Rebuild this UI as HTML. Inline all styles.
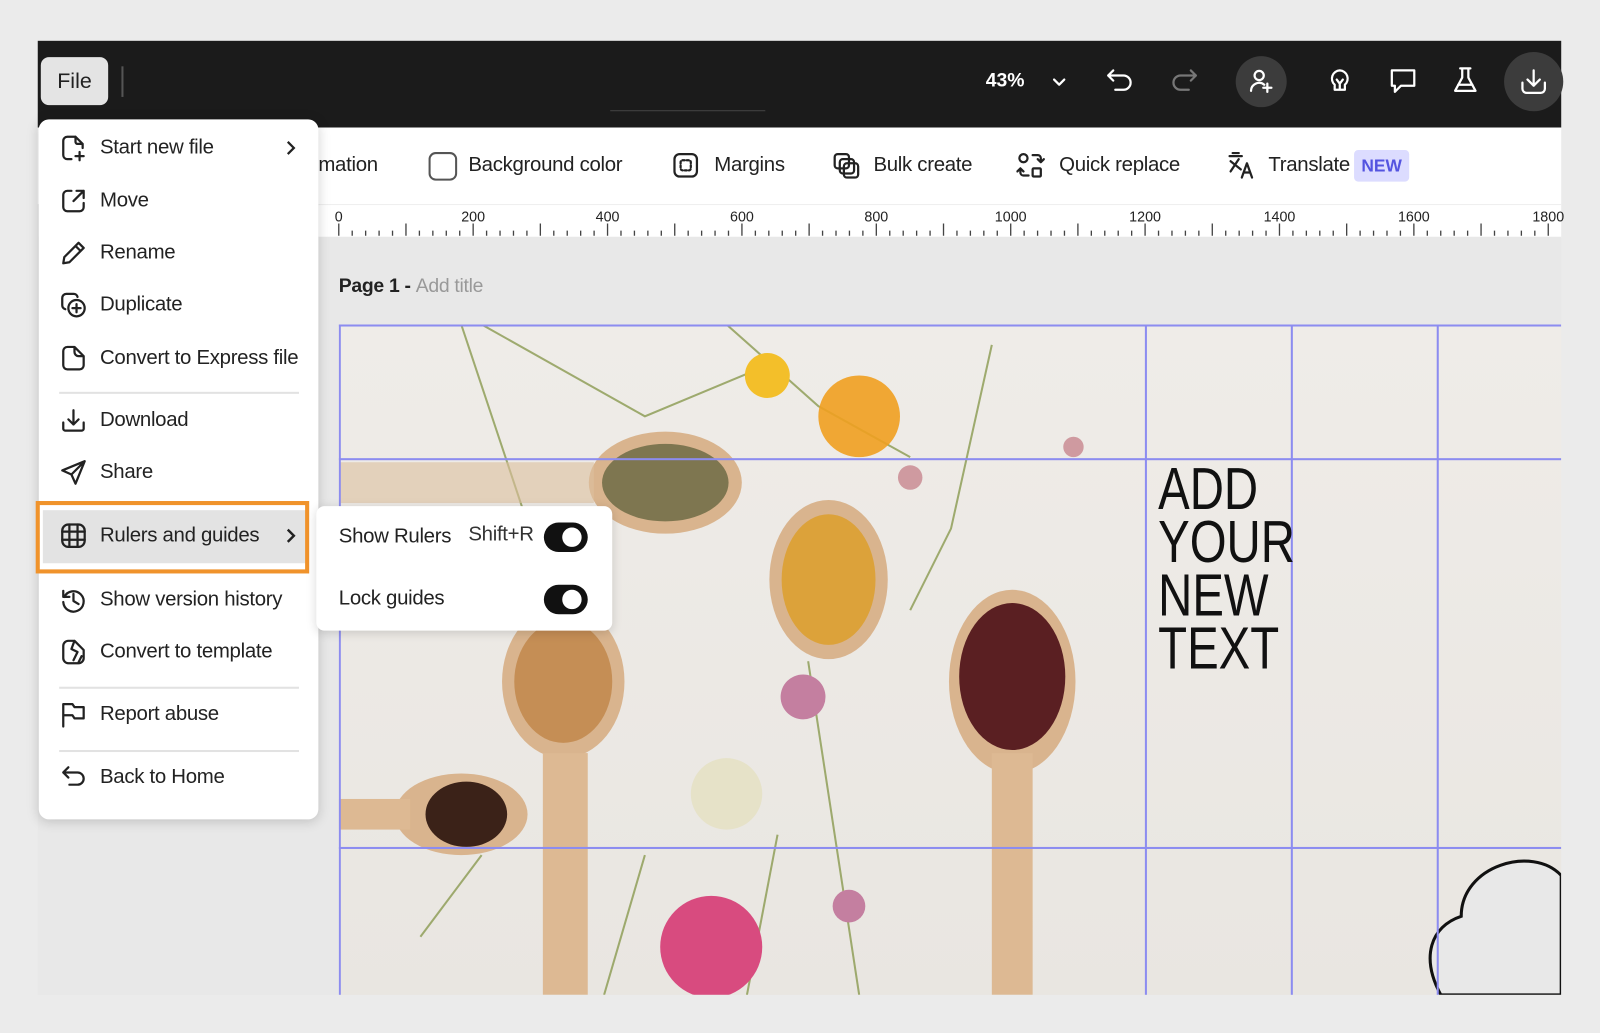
<!DOCTYPE html>
<html><head><meta charset="utf-8"><style>
html,body{margin:0;padding:0;width:1600px;height:1033px;overflow:hidden;background:#ebebeb;font-family:"Liberation Sans",sans-serif;}
#w{position:absolute;left:0;top:0;width:1568px;height:1012px;transform:scale(1.0204);transform-origin:0 0;}
.a{position:absolute;}
.mi{position:absolute;left:98px;font-size:20px;color:#222;transform:translateY(-50%);white-space:nowrap;letter-spacing:-0.3px}
.ic{position:absolute;left:58px;width:28px;height:28px;transform:translateY(-50%);}
.ic svg,.ti svg{width:100%;height:100%;fill:none;stroke:#222;stroke-width:2.2;stroke-linecap:round;stroke-linejoin:round}
.div{position:absolute;left:58px;width:235px;height:2px;background:#e2e2e2}
.tb{position:absolute;top:162px;transform:translateY(-50%);font-size:20px;color:#222;white-space:nowrap;letter-spacing:-0.3px}
.ti{position:absolute;top:148px;width:28px;height:28px}
.rl{position:absolute;top:204px;font-size:14px;color:#222;transform:translateX(-50%)}
.tk svg{stroke:#fff;fill:none;stroke-width:2.2;stroke-linecap:round;stroke-linejoin:round}
</style></head><body><div id="w">
<div class="a" style="left:37px;top:40px;width:1493px;height:85px;background:#1b1b1b"></div>
<div class="a" style="left:40px;top:56px;width:66px;height:47px;background:#e4e4e4;border-radius:8px;font-size:21px;line-height:47px;text-align:center;color:#222">File</div>
<div class="a" style="left:119px;top:65px;width:2px;height:30px;background:#555"></div>
<div class="a" style="left:598px;top:108px;width:152px;height:1px;background:#444"></div>
<div class="a" style="left:966px;top:69px;font-size:19px;font-weight:bold;color:#fff">43%</div>
<div class="a tk" style="left:1028px;top:70px;width:20px;height:20px"><svg viewBox="0 0 20 20"><path d="M5 8l5 5 5-5"/></svg></div>
<div class="a tk" style="left:1082px;top:64px;width:32px;height:32px"><svg viewBox="0 0 32 32"><path d="M9 5L4 10l5 5M4 10h15a7 7 0 010 14h-8"/></svg></div>
<div class="a tk" style="left:1144px;top:64px;width:32px;height:32px"><svg viewBox="0 0 32 32" style="stroke:#777"><path d="M23 5l5 5-5 5M28 10H13a7 7 0 000 14h8"/></svg></div>
<div class="a" style="left:1211px;top:55px;width:50px;height:50px;border-radius:50%;background:#3c3c3c"></div>
<div class="a tk" style="left:1222px;top:66px;width:28px;height:28px"><svg viewBox="0 0 28 28"><circle cx="12" cy="8" r="4.5"/><path d="M4 23a8 8 0 0113-6M20 16v8M16 20h8"/></svg></div>
<div class="a tk" style="left:1299px;top:66px;width:28px;height:28px"><svg viewBox="0 0 28 28"><path d="M14 3a8 8 0 00-5 14v5h10v-5a8 8 0 00-5-14zM11 12l3 4 3-4M14 16v6"/></svg></div>
<div class="a tk" style="left:1360px;top:64px;width:30px;height:30px"><svg viewBox="0 0 30 30"><path d="M4 5h22v15H13l-6 6v-6H4z"/></svg></div>
<div class="a tk" style="left:1422px;top:64px;width:28px;height:30px"><svg viewBox="0 0 28 30"><path d="M9 3h10M11 3v9l-7 13h20l-7-13V3M7 19h14"/></svg></div>
<div class="a" style="left:1474px;top:51px;width:58px;height:58px;border-radius:50%;background:#3c3c3c"></div>
<div class="a tk" style="left:1487px;top:64px;width:32px;height:32px"><svg viewBox="0 0 32 32"><path d="M16 5v15M10 14l6 6 6-6M5 17v6a4 4 0 004 4h14a4 4 0 004-4v-6"/></svg></div>
<div class="a" style="left:37px;top:125px;width:1493px;height:75px;background:#fff"></div>
<div class="tb" style="left:312px">mation</div>
<div class="a" style="left:420px;top:149px;width:24px;height:24px;border:2.5px solid #555;border-radius:7px"></div>
<div class="tb" style="left:459px">Background color</div>
<div class="ti" style="left:658px"><svg viewBox="0 0 28 28"><rect x="3" y="3" width="22" height="22" rx="5"/><rect x="9" y="9" width="10" height="10" rx="2" stroke-dasharray="2 2"/></svg></div>
<div class="tb" style="left:700px">Margins</div>
<div class="ti" style="left:815px"><svg viewBox="0 0 28 28"><rect x="3" y="3" width="14" height="14" rx="3"/><rect x="8" y="8" width="14" height="14" rx="3"/><rect x="12" y="12" width="14" height="14" rx="3"/></svg></div>
<div class="tb" style="left:856px">Bulk create</div>
<div class="ti" style="left:996px"><svg viewBox="0 0 28 28"><circle cx="7" cy="7" r="4"/><rect x="16" y="17" width="8" height="8" rx="1"/><path d="M16 4h5a3 3 0 013 3v3M21 8l3 3 3-3M12 24H7a3 3 0 01-3-3v-3M7 20l-3-3-3 3"/></svg></div>
<div class="tb" style="left:1038px">Quick replace</div>
<div class="ti" style="left:1202px"><svg viewBox="0 0 28 28"><path d="M3 5h12M6 2h6M4 10l10 8M12 8l-8 12M15 26l5-14 5 14M17 21h6"/></svg></div>
<div class="tb" style="left:1243px">Translate</div>
<div class="a" style="left:1327px;top:147px;width:54px;height:31px;background:#dcdcff;border-radius:4px;color:#5454e0;font-weight:bold;font-size:17px;line-height:31px;text-align:center">NEW</div>
<div class="a" style="left:312px;top:200px;width:1218px;height:32px;background:#fff;border-top:1px solid #eee"></div>
<svg class="a" style="left:0;top:0" width="1530" height="240"><g stroke="#444" stroke-width="1.3" id="ticks"></g></svg>
<div id="rlab"></div>
<div class="a" style="left:37px;top:232px;width:1493px;height:743px;background:#e8e8e8"></div>
<div class="a" style="left:332px;top:270px;font-size:19px;color:#222;font-weight:bold;letter-spacing:-0.3px">Page 1 - <span style="font-weight:normal;color:#999">Add title</span></div>
<div class="a" style="left:332px;top:318px;width:1198px;height:657px;overflow:hidden;background:linear-gradient(180deg,#efece8,#e9e6e1)">
<svg width="1198" height="657" style="position:absolute;left:0;top:0">
<g stroke="#8a9a50" stroke-width="2" fill="none" opacity=".8">
<path d="M120 0 L200 240"/><path d="M140 0 L300 90 L420 40"/><path d="M380 0 L470 80 L560 130"/><path d="M640 20 L600 200 L560 280"/><path d="M460 330 L510 657"/><path d="M430 500 L400 657"/><path d="M300 520 L260 657"/><path d="M80 600 L140 520"/>
</g>
<ellipse cx="320" cy="155" rx="75" ry="50" fill="#d9b48e"/><ellipse cx="320" cy="155" rx="62" ry="38" fill="#7e7650"/>
<rect x="0" y="135" width="250" height="40" fill="#dcbf9f" opacity=".6"/>
<ellipse cx="480" cy="250" rx="58" ry="78" fill="#d9b48e"/><ellipse cx="480" cy="250" rx="46" ry="64" fill="#dca23a"/>
<ellipse cx="660" cy="350" rx="62" ry="90" fill="#d9b48e"/><ellipse cx="660" cy="345" rx="52" ry="72" fill="#5a1f22"/>
<rect x="640" y="420" width="40" height="237" fill="#ddb993"/>
<ellipse cx="220" cy="350" rx="60" ry="75" fill="#d9b48e"/><ellipse cx="220" cy="350" rx="48" ry="60" fill="#c58e55"/>
<rect x="200" y="420" width="44" height="237" fill="#ddb993"/>
<ellipse cx="120" cy="480" rx="65" ry="40" fill="#d9b48e"/><ellipse cx="125" cy="480" rx="40" ry="32" fill="#3b2218"/>
<rect x="0" y="465" width="70" height="30" fill="#ddb993"/>
<circle cx="510" cy="90" r="40" fill="#f0a020" opacity=".9"/><circle cx="420" cy="50" r="22" fill="#f3bf2a"/>
<circle cx="365" cy="610" r="50" fill="#d84b7f"/><circle cx="455" cy="365" r="22" fill="#c47fa0"/>
<circle cx="380" cy="460" r="35" fill="#e6e2c8"/><circle cx="500" cy="570" r="16" fill="#c47fa0"/>
<circle cx="560" cy="150" r="12" fill="#cf9aa0"/><circle cx="720" cy="120" r="10" fill="#cf9aa0"/>
<path d="M1080 657 C1060 620 1070 590 1100 580 C1100 530 1170 510 1198 540 L1198 657 Z" fill="#e8e8e8" stroke="#111" stroke-width="3"/>
</svg>
<div class="a" style="left:0;top:0;width:1198px;height:2px;background:#8c8cf0"></div>
<div class="a" style="left:0;top:131px;width:1198px;height:2px;background:#8c8cf0"></div>
<div class="a" style="left:0;top:512px;width:1198px;height:2px;background:#8c8cf0"></div>
<div class="a" style="left:0;top:0;width:2px;height:657px;background:#8c8cf0"></div>
<div class="a" style="left:790px;top:0;width:2px;height:657px;background:#8c8cf0"></div>
<div class="a" style="left:933px;top:0;width:2px;height:657px;background:#8c8cf0"></div>
<div class="a" style="left:1076px;top:0;width:2px;height:657px;background:#8c8cf0"></div>
<div class="a" style="left:803px;top:136px;font-size:58px;line-height:52px;color:#111;transform:scaleX(.8);transform-origin:0 0;font-family:'Liberation Sans Narrow','Liberation Sans',sans-serif">ADD<br>YOUR<br>NEW<br>TEXT</div>
</div>
<div class="a" style="left:38px;top:117px;width:274px;height:686px;background:#fff;border-radius:10px;box-shadow:0 2px 12px rgba(0,0,0,.18)"></div>
<div class="a" style="left:42px;top:500px;width:258px;height:52px;background:#e3e3e3"></div>
<div class="a" style="left:35px;top:491px;width:260px;height:63px;border:4px solid #f0932b"></div>
<div class="ic" style="top:145px"><svg viewBox="0 0 28 28"><path d="M16 3H8a4 4 0 00-4 4v14a4 4 0 004 4h4M16 3l7 7v4M16 3v5a2 2 0 002 2h5M20 18v8M16 22h8"/></svg></div><div class="mi" style="top:145px">Start new file</div>
<div class="a" style="left:278px;top:136px;width:14px;height:18px"><svg viewBox="0 0 14 18" width="14" height="18"><path d="M4 3l6 6-6 6" fill="none" stroke="#222" stroke-width="2.2"/></svg></div>
<div class="ic" style="top:197px"><svg viewBox="0 0 28 28"><path d="M12 4H8a4 4 0 00-4 4v12a4 4 0 004 4h12a4 4 0 004-4v-4M14 14L24 4M17 4h7v7"/></svg></div><div class="mi" style="top:197px">Move</div>
<div class="ic" style="top:248px"><svg viewBox="0 0 28 28"><path d="M19 4l5 5L10 23l-6 1 1-6zM16 7l5 5"/></svg></div><div class="mi" style="top:248px">Rename</div>
<div class="ic" style="top:299px"><svg viewBox="0 0 28 28"><path d="M18 6a4 4 0 00-4-3H7a4 4 0 00-4 4v7a4 4 0 003 4"/><circle cx="17" cy="17" r="8"/><path d="M17 13v8M13 17h8"/></svg></div><div class="mi" style="top:299px">Duplicate</div>
<div class="ic" style="top:351px"><svg viewBox="0 0 28 28"><path d="M15 3H8a4 4 0 00-4 4v14a4 4 0 004 4h12a4 4 0 004-4v-9zM15 3v5a4 4 0 004 4h5"/></svg></div><div class="mi" style="top:351px">Convert to Express file</div>
<div class="div" style="top:384px"></div>
<div class="ic" style="top:412px"><svg viewBox="0 0 28 28"><path d="M14 4v14M9 13l5 5 5-5M4 16v6a2 2 0 002 2h16a2 2 0 002-2v-6"/></svg></div><div class="mi" style="top:412px">Download</div>
<div class="ic" style="top:463px"><svg viewBox="0 0 28 28"><path d="M25 3L3 12l9 4 4 9zM12 16l13-13"/></svg></div><div class="mi" style="top:463px">Share</div>
<div class="ic" style="top:525px"><svg viewBox="0 0 28 28"><rect x="3" y="3" width="22" height="22" rx="6"/><path d="M10 3v22M18 3v22M3 10h22M3 18h22"/></svg></div><div class="mi" style="top:525px">Rulers and guides</div>
<div class="a" style="left:278px;top:516px;width:14px;height:18px"><svg viewBox="0 0 14 18" width="14" height="18"><path d="M4 3l6 6-6 6" fill="none" stroke="#222" stroke-width="2.4"/></svg></div>
<div class="ic" style="top:588px"><svg viewBox="0 0 28 28"><path d="M4 5v6h6M5 11a10 10 0 11-1 5M14 8v7l5 3"/></svg></div><div class="mi" style="top:588px">Show version history</div>
<div class="ic" style="top:639px"><svg viewBox="0 0 28 28"><path d="M15 3H9a5 5 0 00-5 5v12a5 5 0 005 5h10a5 5 0 005-5v-8zM15 3l-3 8 6 3-4 8M22 18l-3 6"/></svg></div><div class="mi" style="top:639px">Convert to template</div>
<div class="div" style="top:673px"></div>
<div class="ic" style="top:700px"><svg viewBox="0 0 28 28"><path d="M4 26V4h9l2 3h9v11h-9l-2-3H4"/></svg></div><div class="mi" style="top:700px">Report abuse</div>
<div class="div" style="top:735px"></div>
<div class="ic" style="top:762px"><svg viewBox="0 0 28 28"><path d="M9 4L4 9l5 5M4 9h14a6 6 0 010 12h-8"/></svg></div><div class="mi" style="top:762px">Back to Home</div>
<div class="a" style="left:310px;top:496px;width:290px;height:122px;background:#fff;border-radius:8px;box-shadow:0 2px 10px rgba(0,0,0,.15)"></div>
<div class="mi" style="left:332px;top:526px">Show Rulers</div>
<div class="mi" style="left:459px;top:524px;color:#333">Shift+R</div>
<div class="a" style="left:533px;top:512px;width:43px;height:29px;background:#111;border-radius:15px"><div class="a" style="left:18px;top:5px;width:19px;height:19px;border-radius:50%;background:#fff"></div></div>
<div class="mi" style="left:332px;top:587px">Lock guides</div>
<div class="a" style="left:533px;top:573px;width:43px;height:29px;background:#111;border-radius:15px"><div class="a" style="left:18px;top:5px;width:19px;height:19px;border-radius:50%;background:#fff"></div></div>
</div>
<script>
var g=document.getElementById('ticks'),s='',l='';
for(var i=0;i<=200;i+=2){var x=332+i*6.585;if(x>1528)break;var h=(i%10==0)?12:(i%5==0?8:5);s+='<line x1="'+x+'" x2="'+x+'" y1="'+(231-h)+'" y2="231"/>';}
g.innerHTML=s;
for(var k=0;k<=9;k++){var x=332+k*131.7;l+='<div class="rl" style="left:'+x+'px">'+(k*200)+'</div>';}
document.getElementById('rlab').innerHTML=l;
</script>
</body></html>
